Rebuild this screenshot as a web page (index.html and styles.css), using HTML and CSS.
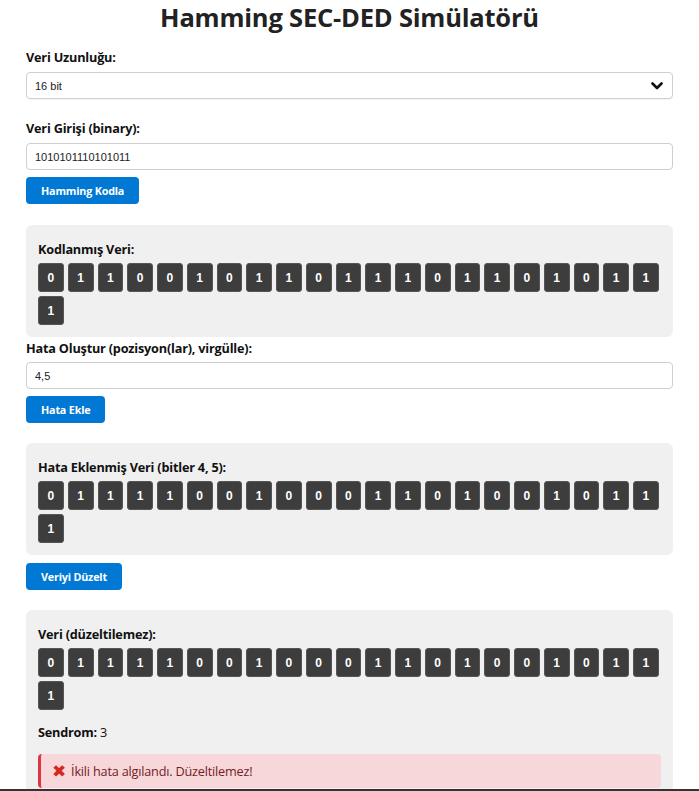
FILE: index.html
```html
<!DOCTYPE html>
<html lang="tr">
<head>
<meta charset="utf-8">
<title>Hamming SEC-DED Simülatörü</title>
<link rel="stylesheet" href="styles.css">
</head>
<body>
<div class="container">
  <h1 class="title">Hamming SEC-DED Simülatörü</h1>

  <label class="label">Veri Uzunluğu:</label>
  <div class="select-wrap">
    <select class="select">
      <option>16 bit</option>
    </select>
    <svg class="chevron" width="12" height="8" viewBox="0 0 12 8"><path d="M1.5 1.5 L6 6 L10.5 1.5" fill="none" stroke="#111" stroke-width="2.6" stroke-linecap="round" stroke-linejoin="round"/></svg>
  </div>

  <label class="label label-gap">Veri Girişi (binary):</label>
  <input class="input" type="text" value="1010101110101011">
  <button class="btn">Hamming Kodla</button>

  <div class="panel panel-first">
    <div class="panel-title">Kodlanmış Veri:</div>
    <div class="bits">
      <span class="bit">0</span><span class="bit">1</span><span class="bit">1</span><span class="bit">0</span><span class="bit">0</span><span class="bit">1</span><span class="bit">0</span><span class="bit">1</span><span class="bit">1</span><span class="bit">0</span><span class="bit">1</span><span class="bit">1</span><span class="bit">1</span><span class="bit">0</span><span class="bit">1</span><span class="bit">1</span><span class="bit">0</span><span class="bit">1</span><span class="bit">0</span><span class="bit">1</span><span class="bit">1</span><span class="bit">1</span>
    </div>
  </div>

  <label class="label label-after-panel">Hata Oluştur (pozisyon(lar), virgülle):</label>
  <input class="input input-tight" type="text" value="4,5">
  <button class="btn">Hata Ekle</button>

  <div class="panel panel-second">
    <div class="panel-title">Hata Eklenmiş Veri (bitler 4, 5):</div>
    <div class="bits">
      <span class="bit">0</span><span class="bit">1</span><span class="bit">1</span><span class="bit">1</span><span class="bit">1</span><span class="bit">0</span><span class="bit">0</span><span class="bit">1</span><span class="bit">0</span><span class="bit">0</span><span class="bit">0</span><span class="bit">1</span><span class="bit">1</span><span class="bit">0</span><span class="bit">1</span><span class="bit">0</span><span class="bit">0</span><span class="bit">1</span><span class="bit">0</span><span class="bit">1</span><span class="bit">1</span><span class="bit">1</span>
    </div>
  </div>

  <button class="btn btn-after-panel">Veriyi Düzelt</button>

  <div class="panel panel-third">
    <div class="panel-title">Veri (düzeltilemez):</div>
    <div class="bits">
      <span class="bit">0</span><span class="bit">1</span><span class="bit">1</span><span class="bit">1</span><span class="bit">1</span><span class="bit">0</span><span class="bit">0</span><span class="bit">1</span><span class="bit">0</span><span class="bit">0</span><span class="bit">0</span><span class="bit">1</span><span class="bit">1</span><span class="bit">0</span><span class="bit">1</span><span class="bit">0</span><span class="bit">0</span><span class="bit">1</span><span class="bit">0</span><span class="bit">1</span><span class="bit">1</span><span class="bit">1</span>
    </div>
    <p class="syndrome"><strong>Sendrom:</strong> 3</p>
    <div class="alert"><span class="alert-icon">✖</span>İkili hata algılandı. Düzeltilemez!</div>
  </div>
</div>
<div class="frame-line"></div>
</body>
</html>
```

FILE: styles.css
```css
* { box-sizing: border-box; }

html, body {
  margin: 0;
  padding: 0;
  background: #ffffff;
  height: 791px;
  overflow: hidden;
}

body {
  font-family: "Open Sans", "Noto Sans", sans-serif;
  color: #111;
}

.container {
  padding: 0 26px;
}

.title {
  margin: 0;
  padding-top: 1px;
  font-size: 25.5px;
  line-height: 32px;
  font-weight: 700;
  text-align: center;
  color: #222;
  letter-spacing: -0.2px;
}

.label {
  display: block;
  font-size: 12.7px;
  line-height: 16px;
  font-weight: 700;
  margin-top: 16px;
  margin-bottom: 7px;
  letter-spacing: -0.2px;
}

.label-gap { margin-top: 21px; }
.label-after-panel { margin-top: 3px; margin-bottom: 6px; }

.select-wrap {
  position: relative;
}

.select {
  display: block;
  width: 100%;
  height: 27px;
  border: 1px solid #cfcfcf;
  border-radius: 4px;
  background: #fff;
  padding: 0 8px;
  font-family: "Liberation Sans", Arial, sans-serif;
  font-size: 11px;
  color: #222;
  appearance: none;
  -webkit-appearance: none;
  box-shadow: 0 1px 1px rgba(0,0,0,0.04);
}

.chevron {
  position: absolute;
  right: 10px;
  top: 10px;
  pointer-events: none;
}

.input {
  display: block;
  width: 100%;
  height: 27px;
  border: 1px solid #cfcfcf;
  border-radius: 4px;
  padding: 0 8px;
  font-family: "Liberation Sans", Arial, sans-serif;
  font-size: 11px;
  color: #222;
  background: #fff;
}

.btn {
  display: block;
  margin-top: 7px;
  height: 27px;
  padding: 0 15px;
  border: none;
  border-radius: 4px;
  background: #0078d4;
  color: #fff;
  font-family: "Open Sans", "Noto Sans", sans-serif;
  font-weight: 700;
  font-size: 10.8px;
  letter-spacing: -0.2px;
}

.btn-after-panel { margin-top: 8px; }

.panel {
  background: #f0f0f0;
  border-radius: 6px;
  padding: 12px;
  margin-top: 21px;
}

.panel-second { margin-top: 20px; }
.panel-third { margin-top: 20px; }

.panel-title {
  font-size: 12.7px;
  line-height: 16px;
  font-weight: 700;
  margin-top: 4px;
  margin-bottom: 6px;
  letter-spacing: -0.2px;
}

.bits {
  display: flex;
  flex-wrap: wrap;
  gap: 4px 4px;
}

.bit {
  width: 25.75px;
  height: 29px;
  display: flex;
  align-items: center;
  justify-content: center;
  background: #3d3d3d;
  border: 1px solid #555;
  border-radius: 3px;
  color: #fff;
  font-family: "Liberation Sans", Arial, sans-serif;
  font-weight: 700;
  font-size: 12px;
}

.syndrome {
  margin: 14px 0 0;
  font-size: 12.7px;
  line-height: 16px;
  letter-spacing: -0.2px;
}

.alert {
  margin-top: 14px;
  background: #f8d7da;
  color: #721c24;
  border-left: 3px solid #dc3545;
  border-radius: 4px;
  padding: 9px 11px;
  font-size: 12.7px;
  line-height: 16px;
  letter-spacing: -0.2px;
}

.alert-icon {
  color: #d42a1e;
  font-family: "DejaVu Sans", sans-serif;
  font-size: 17px;
  line-height: 16px;
  margin-right: 5px;
  vertical-align: -1px;
}

.frame-line {
  position: fixed;
  left: 0;
  right: 0;
  bottom: 0;
  height: 2px;
  background: #333;
}
```
